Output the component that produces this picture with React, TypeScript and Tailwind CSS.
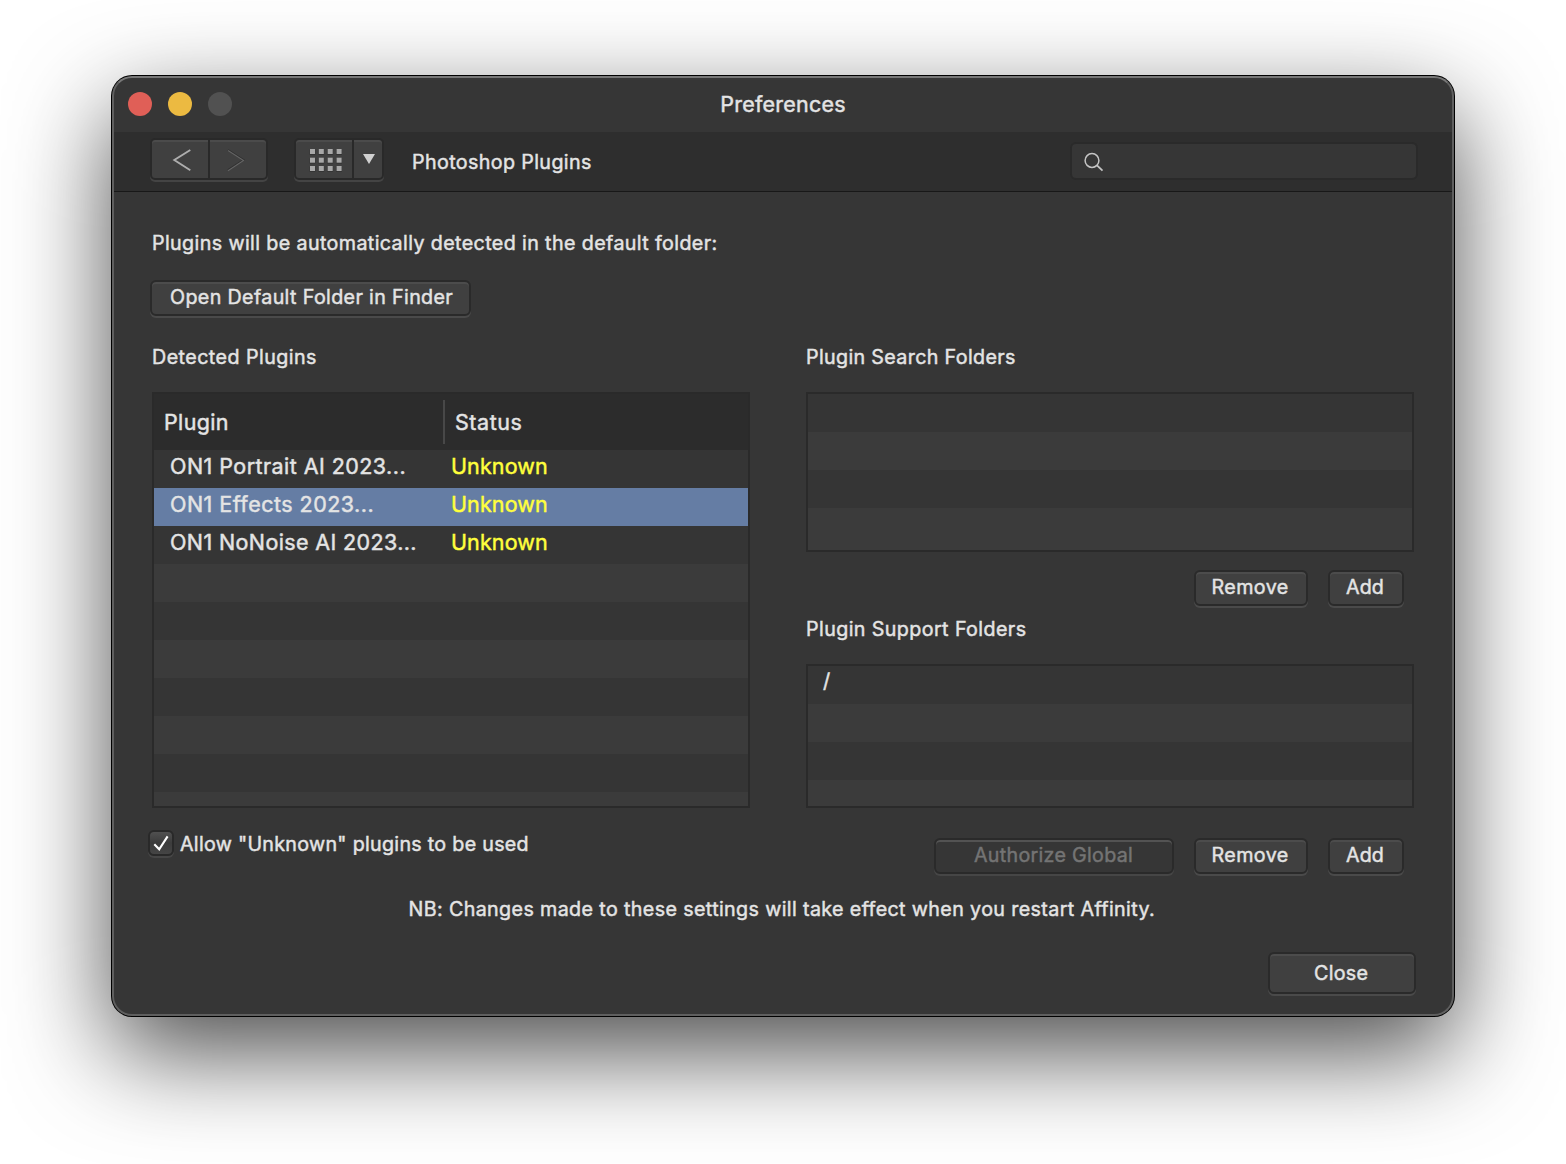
import React from "react";

type ButtonProps = {
  children?: React.ReactNode;
  className?: string;
  disabled?: boolean;
};

function PushButton({ children, className = "", disabled = false }: ButtonProps) {
  const tone = disabled
    ? "bg-[#363636] text-[#747474] shadow-[inset_0_2px_0_#535353,0_2px_0_#464646]"
    : "bg-[#404040] text-[#e4e4e4] shadow-[inset_0_2px_0_#4c4c4c,0_2px_0_#4a4a4a]";
  return (
    <button
      disabled={disabled}
      className={`flex shrink-0 justify-start whitespace-nowrap rounded-[6px] border-2 border-[#2a2a2a] leading-6 ${tone} ${className}`}
    >
      {children}
    </button>
  );
}

function StripedList({ rows, className = "" }: { rows: React.ReactNode[]; className?: string }) {
  return (
    <div className={`flex flex-col overflow-hidden ${className}`}>
      {rows.map((row, i) => (
        <div
          key={i}
          className={`h-[38px] shrink-0 last:h-auto last:grow last:shrink ${i % 2 ? "bg-[#3b3b3b]" : "bg-[#353535]"}`}
        >
          {row}
        </div>
      ))}
    </div>
  );
}

type PluginRowProps = { name: string; selected?: boolean; spacing: string };

function PluginRow({ name, selected = false, spacing }: PluginRowProps) {
  return (
    <div className={`flex h-[38px] pl-4 pt-1 text-[21.5px] leading-6 ${selected ? "bg-[#657da4]" : ""}`}>
      <span className={`w-[281px] ${spacing}`}>{name}</span>
      <span className="tracking-[0.116px] text-[#ffff3c]">Unknown</span>
    </div>
  );
}

function TitleBar() {
  return (
    <header className="grid h-[54px] grid-cols-[1fr_auto_1fr] items-start">
      <div className="flex gap-4 pl-[14px] pt-[14px]">
        <span className="size-6 rounded-full bg-[#e05f57]" />
        <span className="size-6 rounded-full bg-[#ecba41]" />
        <span className="size-6 rounded-full bg-[#515151]" />
      </div>
      <h1 className="mt-[14px] text-[21.5px] leading-6 tracking-[0.234px]">Preferences</h1>
    </header>
  );
}

function Toolbar() {
  return (
    <div className="flex h-[60px] items-start border-b border-[#181818] bg-[#2e2e2e] pl-9 pt-[6px]">
      <div className="flex h-[42px] w-[118px] rounded-[5px] border-2 border-[#292929] bg-[#404040] shadow-[inset_0_2px_0_#4b4b4b,0_2px_0_#444]">
        <div className="w-[58px] border-r-2 border-[#292929]">
          <svg width="56" height="38" fill="none" stroke="#adadad" strokeWidth="1.9">
            <path d="M38.3 10 22.3 20 38.3 30.2" />
          </svg>
        </div>
        <svg width="56" height="38" fill="none">
          <path d="M18 10 33.5 20 18 30.2" stroke="#303030" strokeWidth="2" />
          <path d="M18 10.5 33.5 20.4 18 30.7" stroke="#646464" strokeWidth="1.2" />
        </svg>
      </div>
      <div className="ml-[26px] flex h-[42px] w-[90px] rounded-[5px] border-2 border-[#292929] bg-[#404040] shadow-[inset_0_2px_0_#4b4b4b,0_2px_0_#444]">
        <div className="w-[58px] border-r-2 border-[#292929]">
          <svg width="56" height="38">
            {[9, 17.7, 26].map((y) =>
              [14, 22.8, 31.7, 40.6].map((x) => (
                <g key={`${x}-${y}`}>
                  <rect x={x - 0.4} y={y + 0.6} width="5.8" height="5.4" fill="#343434" />
                  <rect x={x} y={y} width="5" height="5" fill="#a8a8a8" />
                </g>
              )),
            )}
          </svg>
        </div>
        <svg width="28" height="38">
          <path d="M9 14H21L15 24Z" fill="#d0d0d0" />
        </svg>
      </div>
      <h2 className="ml-7 mt-3 text-[19.7px] leading-6 tracking-[0.377px]">Photoshop Plugins</h2>
      <div className="ml-auto mr-[34px] mt-1 h-[38px] w-[348px] rounded-[6px] border-2 border-[#2a2a2a] bg-[#363636]">
        <svg width="40" height="34" fill="none" stroke="#c4c4c4" strokeWidth="1.5">
          <circle cx="20" cy="16.5" r="6.9" />
          <path d="M25 21.3 30.5 26.7" strokeWidth="1.8" />
        </svg>
      </div>
    </div>
  );
}

function DetectedPlugins() {
  return (
    <section className="w-[598px]">
      <h3 className="leading-6 tracking-[0.438px]">Detected Plugins</h3>
      <div className="mt-[23px] flex h-[416px] flex-col border-2 border-[#2a2a2a]">
        <div className="flex h-14 shrink-0 bg-[#2c2c2c] pl-[10px] text-[21.5px] leading-6">
          <div className="w-[279px] pt-4 tracking-[0.35px]">Plugin</div>
          <div className="mt-[6px] h-11 w-[2px] bg-[#484848]" />
          <div className="pl-[10px] pt-4 tracking-[0.549px]">Status</div>
        </div>
        <StripedList
          className="grow"
          rows={[
            <PluginRow name="ON1 Portrait AI 2023..." spacing="tracking-[0.45px]" />,
            <PluginRow name="ON1 Effects 2023..." spacing="tracking-[0.48px]" selected />,
            <PluginRow name="ON1 NoNoise AI 2023..." spacing="tracking-[0.38px]" />,
            null,
            null,
            null,
            null,
            null,
            null,
            null,
          ]}
        />
      </div>
      <label className="-ml-1 mt-[22px] flex items-start">
        <span className="size-[26px] rounded-[6px] border-2 border-[#292929] bg-linear-to-b from-[#505050] via-[#3c3c3c] to-[#454545] shadow-[0_2px_0_#464646]">
          <svg width="22" height="22" fill="none" stroke="#fff" strokeWidth="2.1">
            <path d="M4.3 12.2 9.2 17.3 17.6 4.4" />
          </svg>
        </span>
        <span className="ml-[6px] mt-[2px] leading-6 tracking-[0.29px]">Allow &quot;Unknown&quot; plugins to be used</span>
      </label>
    </section>
  );
}

function FolderLists() {
  return (
    <section className="w-[608px]">
      <h3 className="leading-6 tracking-[0.339px]">Plugin Search Folders</h3>
      <StripedList className="mt-[23px] h-[160px] border-2 border-[#2a2a2a]" rows={[null, null, null, null]} />
      <div className="mt-[18px] flex justify-end gap-5 pr-[10px]">
        <PushButton className="h-9 w-[114px] pl-[15.5px] pt-[3px] tracking-[0.42px]">Remove</PushButton>
        <PushButton className="h-9 w-[76px] pl-4 pt-[3px] tracking-[0.1px]">Add</PushButton>
      </div>
      <h3 className="mt-[11px] leading-6 tracking-[0.4px]">Plugin Support Folders</h3>
      <StripedList
        className="mt-[23px] h-[144px] border-2 border-[#2a2a2a]"
        rows={[<div className="pl-[15px] pt-[3px] text-[20px] leading-6">/</div>, null, null, null]}
      />
      <div className="mt-[30px] flex justify-end gap-5 pr-[10px]">
        <PushButton disabled className="h-9 w-[240px] pl-[38px] pt-[3px] tracking-[0.283px]">
          Authorize Global
        </PushButton>
        <PushButton className="h-9 w-[114px] pl-[15.5px] pt-[3px] tracking-[0.42px]">Remove</PushButton>
        <PushButton className="h-9 w-[76px] pl-4 pt-[3px] tracking-[0.1px]">Add</PushButton>
      </div>
    </section>
  );
}

export default function App() {
  return (
    <div className="h-[1164px] w-[1566px] overflow-hidden bg-white pl-[112px] pt-[76px] font-['Inter',sans-serif] text-[#e4e4e4] [-webkit-text-stroke:0.45px_currentColor]">
      <div className="h-[940px] w-[1342px] overflow-hidden rounded-[20px] border-2 border-[#5f5f5f] border-t-[#777] bg-[#363636] text-[19.7px] shadow-[0_0_0_1px_#000,0_36px_100px_rgba(0,0,0,0.71)]">
        <TitleBar />
        <Toolbar />
        <main className="pl-[38px] pr-[38px] pt-[39px]">
          <p className="leading-6 tracking-[0.38px]">Plugins will be automatically detected in the default folder:</p>
          <PushButton className="-ml-[2px] mt-[25px] h-9 w-[321px] pl-[18px] pt-[3px] tracking-[0.35px]">
            Open Default Folder in Finder
          </PushButton>
          <div className="mt-[29px] flex h-[529px] justify-between">
            <DetectedPlugins />
            <FolderLists />
          </div>
          <p className="mt-[23px] pl-[256.5px] leading-6 tracking-[0.371px]">
            NB: Changes made to these settings will take effect when you restart Affinity.
          </p>
          <PushButton className="-mr-[2px] ml-auto mt-[31px] h-[42px] w-[148px] pl-11 pt-[7px] tracking-[0.289px]">Close</PushButton>
        </main>
      </div>
    </div>
  );
}
